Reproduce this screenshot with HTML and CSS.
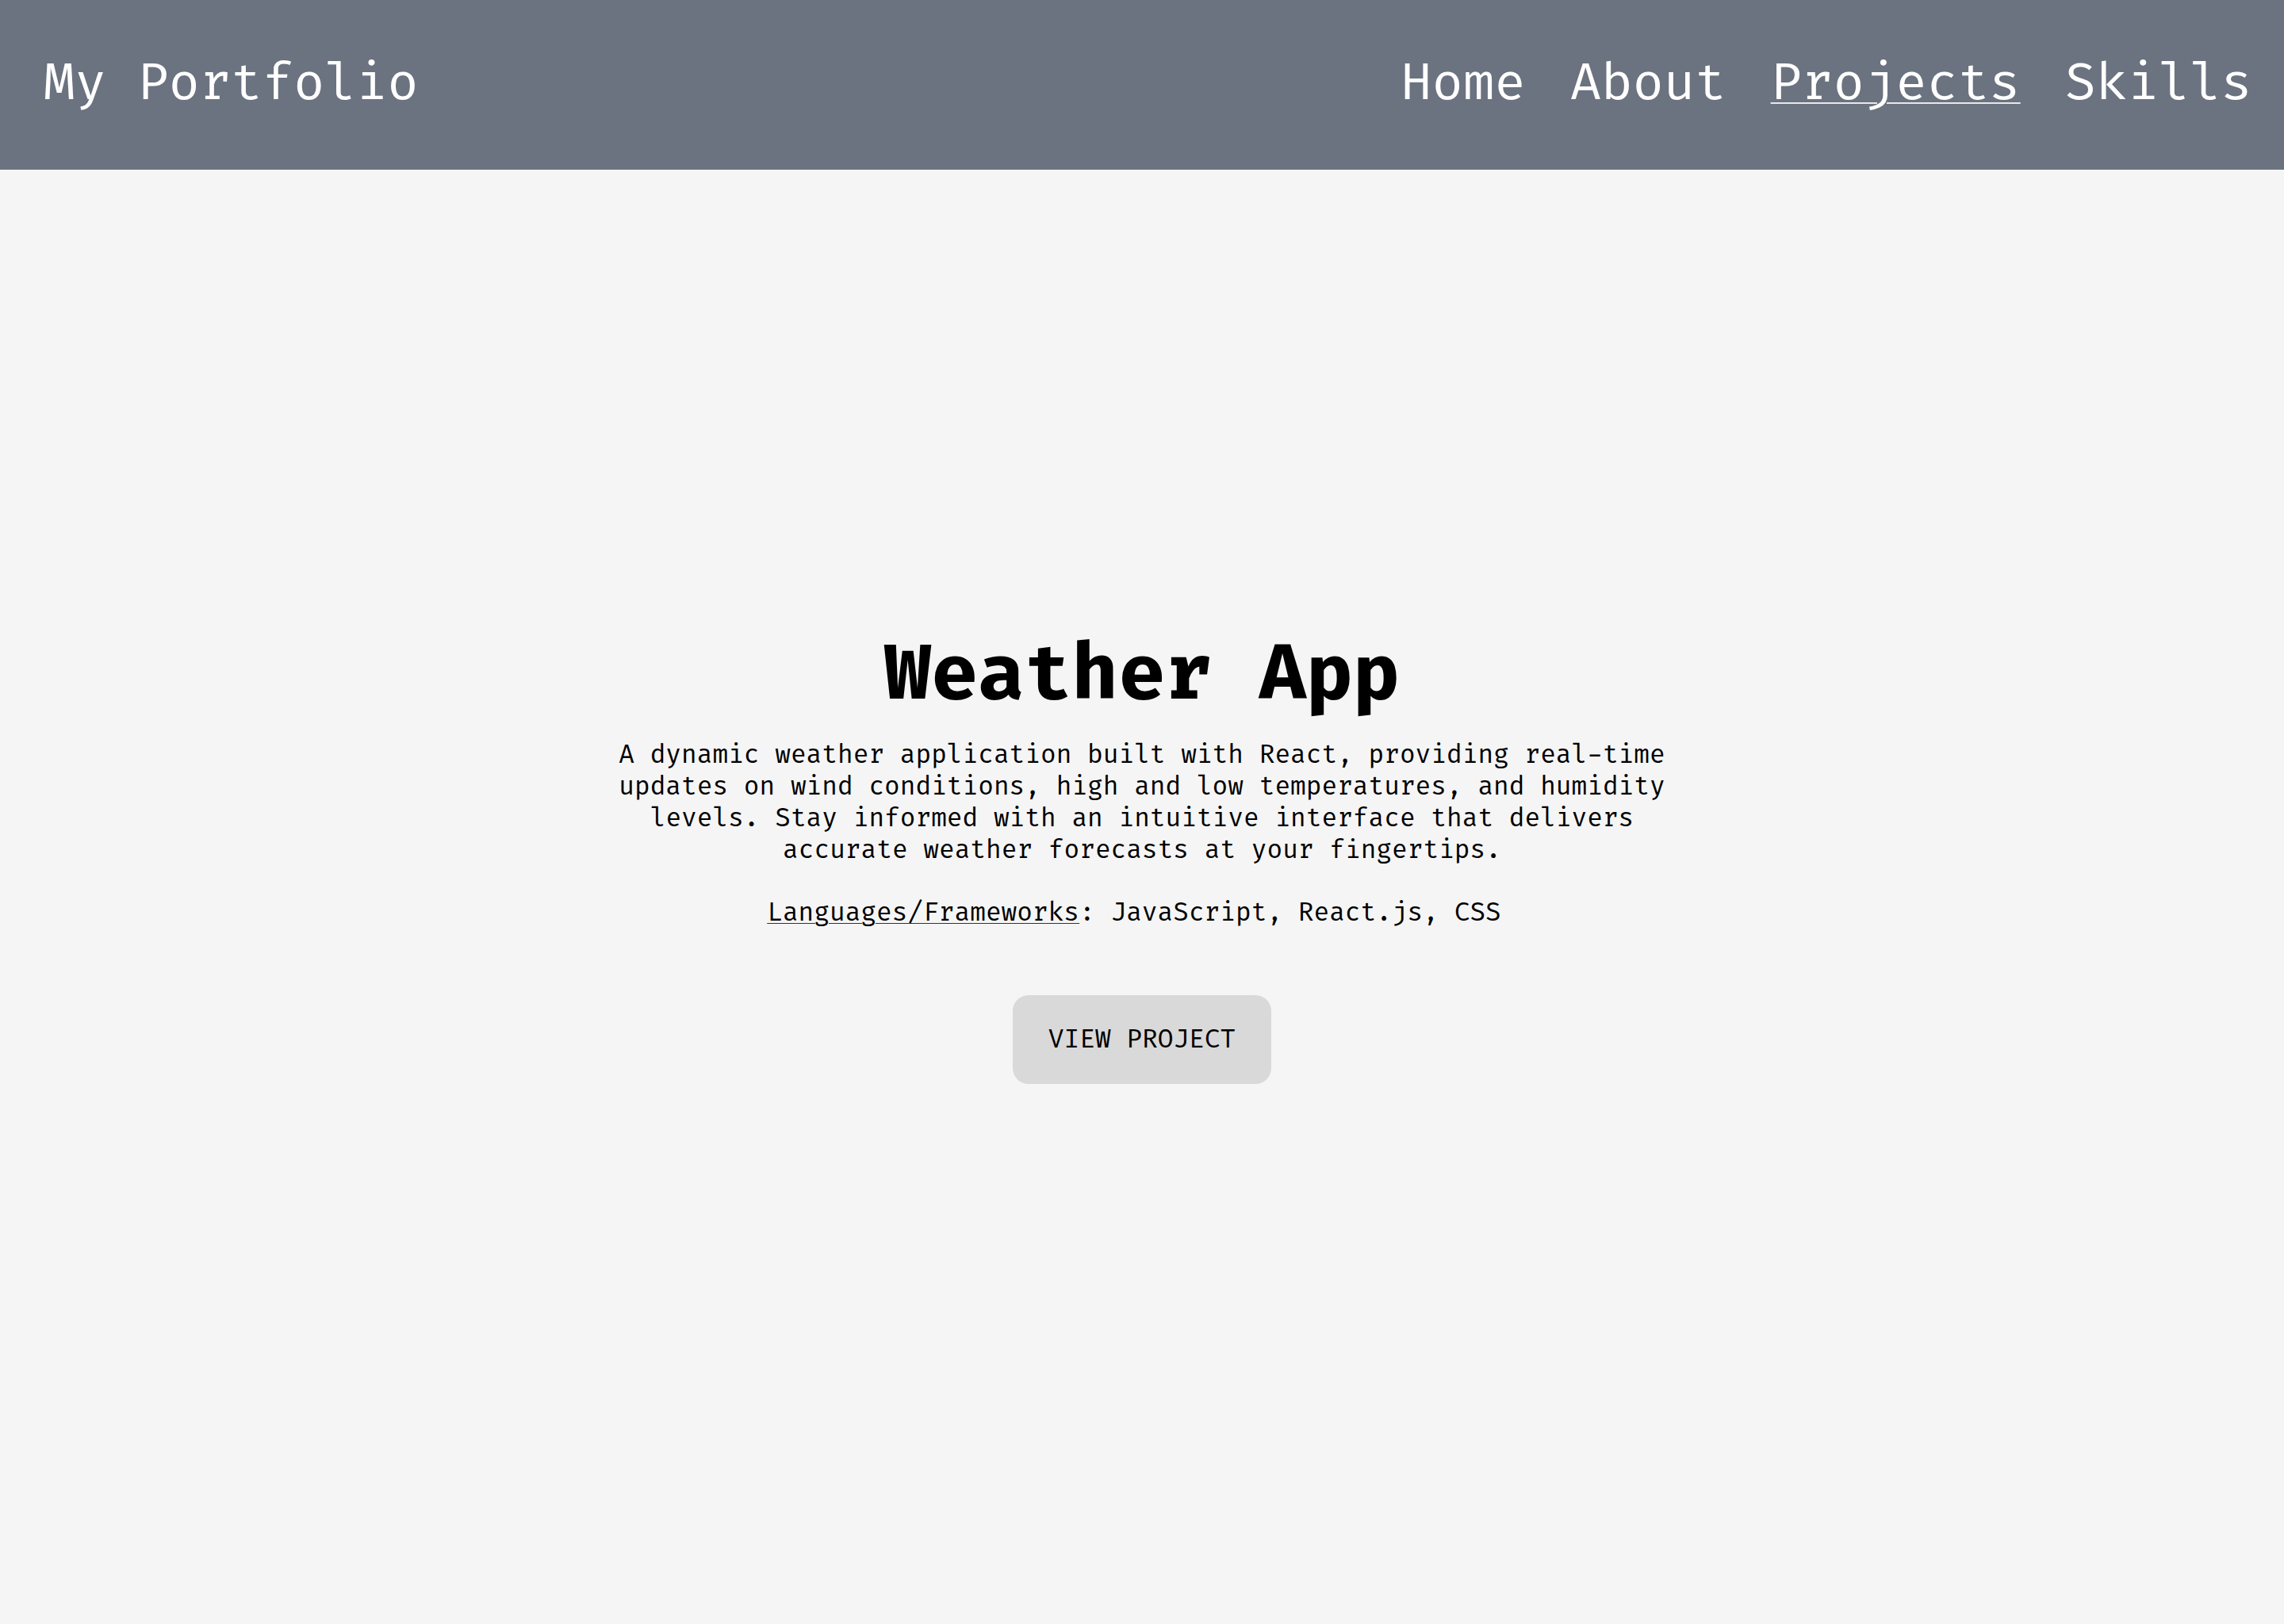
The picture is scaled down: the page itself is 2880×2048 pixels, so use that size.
FILE: index.html
```html
<!DOCTYPE html>
<html lang="en">
<head>
<meta charset="utf-8">
<title>My Portfolio</title>
<link rel="stylesheet" href="styles.css">
</head>
<body>
  <header class="site-header">
    <a class="brand" href="#">My Portfolio</a>
    <nav>
      <ul class="nav-list">
        <li><a class="nav-link" href="#">Home</a></li>
        <li><a class="nav-link" href="#">About</a></li>
        <li><a class="nav-link active" href="#">Projects</a></li>
        <li><a class="nav-link" href="#">Skills</a></li>
      </ul>
    </nav>
  </header>
  <main class="project">
    <h1 class="project-title">Weather App</h1>
    <p class="project-desc">A dynamic weather application built with React, providing real-time updates on wind conditions, high and low temperatures, and humidity levels. Stay informed with an intuitive interface that delivers accurate weather forecasts at your fingertips.</p>
    <p class="project-tech"><span class="tech-label">Languages/Frameworks</span>: JavaScript, React.js, CSS</p>
    <a class="project-btn" href="#">VIEW PROJECT</a>
  </main>
</body>
</html>
```

FILE: styles.css
```css
* {
  box-sizing: border-box;
}

html, body {
  margin: 0;
  padding: 0;
}

body {
  background: #f5f5f5;
  color: #000;
  font-family: "Fira Code", "DejaVu Sans Mono", "Liberation Mono", monospace;
  min-height: 2048px;
}

a {
  color: inherit;
  text-decoration: none;
}

.site-header {
  height: 214px;
  background: #6b7280;
  display: flex;
  align-items: center;
  justify-content: space-between;
  padding: 0 40px 1px 55px;
  color: #fff;
}

.brand {
  font-size: 64px;
  line-height: 1.2;
  color: #fff;
}

.nav-list {
  list-style: none;
  margin: 0;
  padding: 0;
  display: flex;
  gap: 56px;
}

.nav-link {
  font-size: 64px;
  line-height: 1.2;
  color: #fff;
}

.nav-link.active {
  text-decoration: underline;
  text-decoration-thickness: 2px;
  text-underline-offset: 4px;
  text-decoration-color: #e8e8e8;
}

.project {
  display: flex;
  flex-direction: column;
  align-items: center;
  padding-top: 579px;
  text-align: center;
}

.project-title {
  margin: 0;
  font-size: 96px;
  line-height: 118px;
  font-weight: 700;
}

.project-desc {
  margin: 21px 0 0;
  max-width: 1360px;
  font-size: 32px;
  line-height: 40px;
}

.project-tech {
  margin: 39px 0 0;
  padding-right: 20px;
  font-size: 32px;
  line-height: 40px;
}

.tech-label {
  text-decoration: underline;
  text-decoration-thickness: 1px;
  text-underline-offset: 3px;
  text-decoration-color: #333;
}

.project-btn {
  margin-top: 84px;
  width: 326px;
  height: 112px;
  padding: 36px 0;
  background: #d9d9d9;
  border-radius: 20px;
  font-size: 32px;
  line-height: 40px;
  color: #000;
  text-align: center;
}
```
